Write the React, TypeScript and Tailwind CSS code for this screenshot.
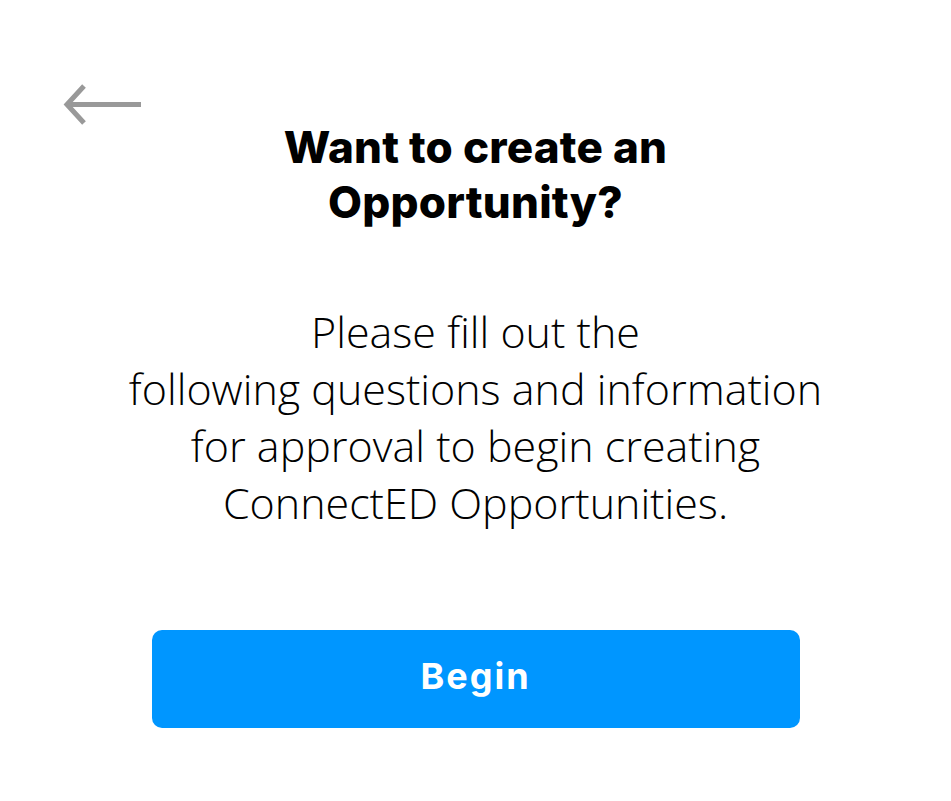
import type { FunctionComponent } from "react";

const BackArrow: FunctionComponent = () => {
	return (
		<svg width="82" height="48" viewBox="0 0 82 48" fill="none" className="block">
			<path d="M5 24.5 H79" stroke="#999999" strokeWidth="5" />
			<path d="M22 6 L5 24.5 L22 43" stroke="#999999" strokeWidth="5" />
		</svg>
	);
};

export default function App() {
	return (
		<main className="flex min-h-[801px] w-full flex-col bg-white font-['Open_Sans',sans-serif]">
			<div className="pl-[62px] pt-[80px]">
				<button type="button" aria-label="Back" className="block">
					<BackArrow />
				</button>
			</div>
			<h1 className="mx-auto -mt-[8px] w-[460px] text-center font-['Inter',sans-serif] text-[44px] font-extrabold leading-[55px] tracking-[0.2px] text-black">
				Want to create an Opportunity?
			</h1>
			<p className="mx-auto mt-[73px] w-[780px] text-center text-[43px] font-light leading-[57px] text-black">
				Please fill out the
				<br />
				following questions and information
				<br />
				for approval to begin creating
				<br />
				ConnectED Opportunities.
			</p>
			<div className="mt-[99px] flex justify-center">
				<button
					type="button"
					className="h-[98px] w-[648px] rounded-[10px] bg-[#0096ff] pb-[6px] font-['Inter',sans-serif] text-[36px] font-bold tracking-[2px] text-white"
				>
					Begin
				</button>
			</div>
		</main>
	);
}
